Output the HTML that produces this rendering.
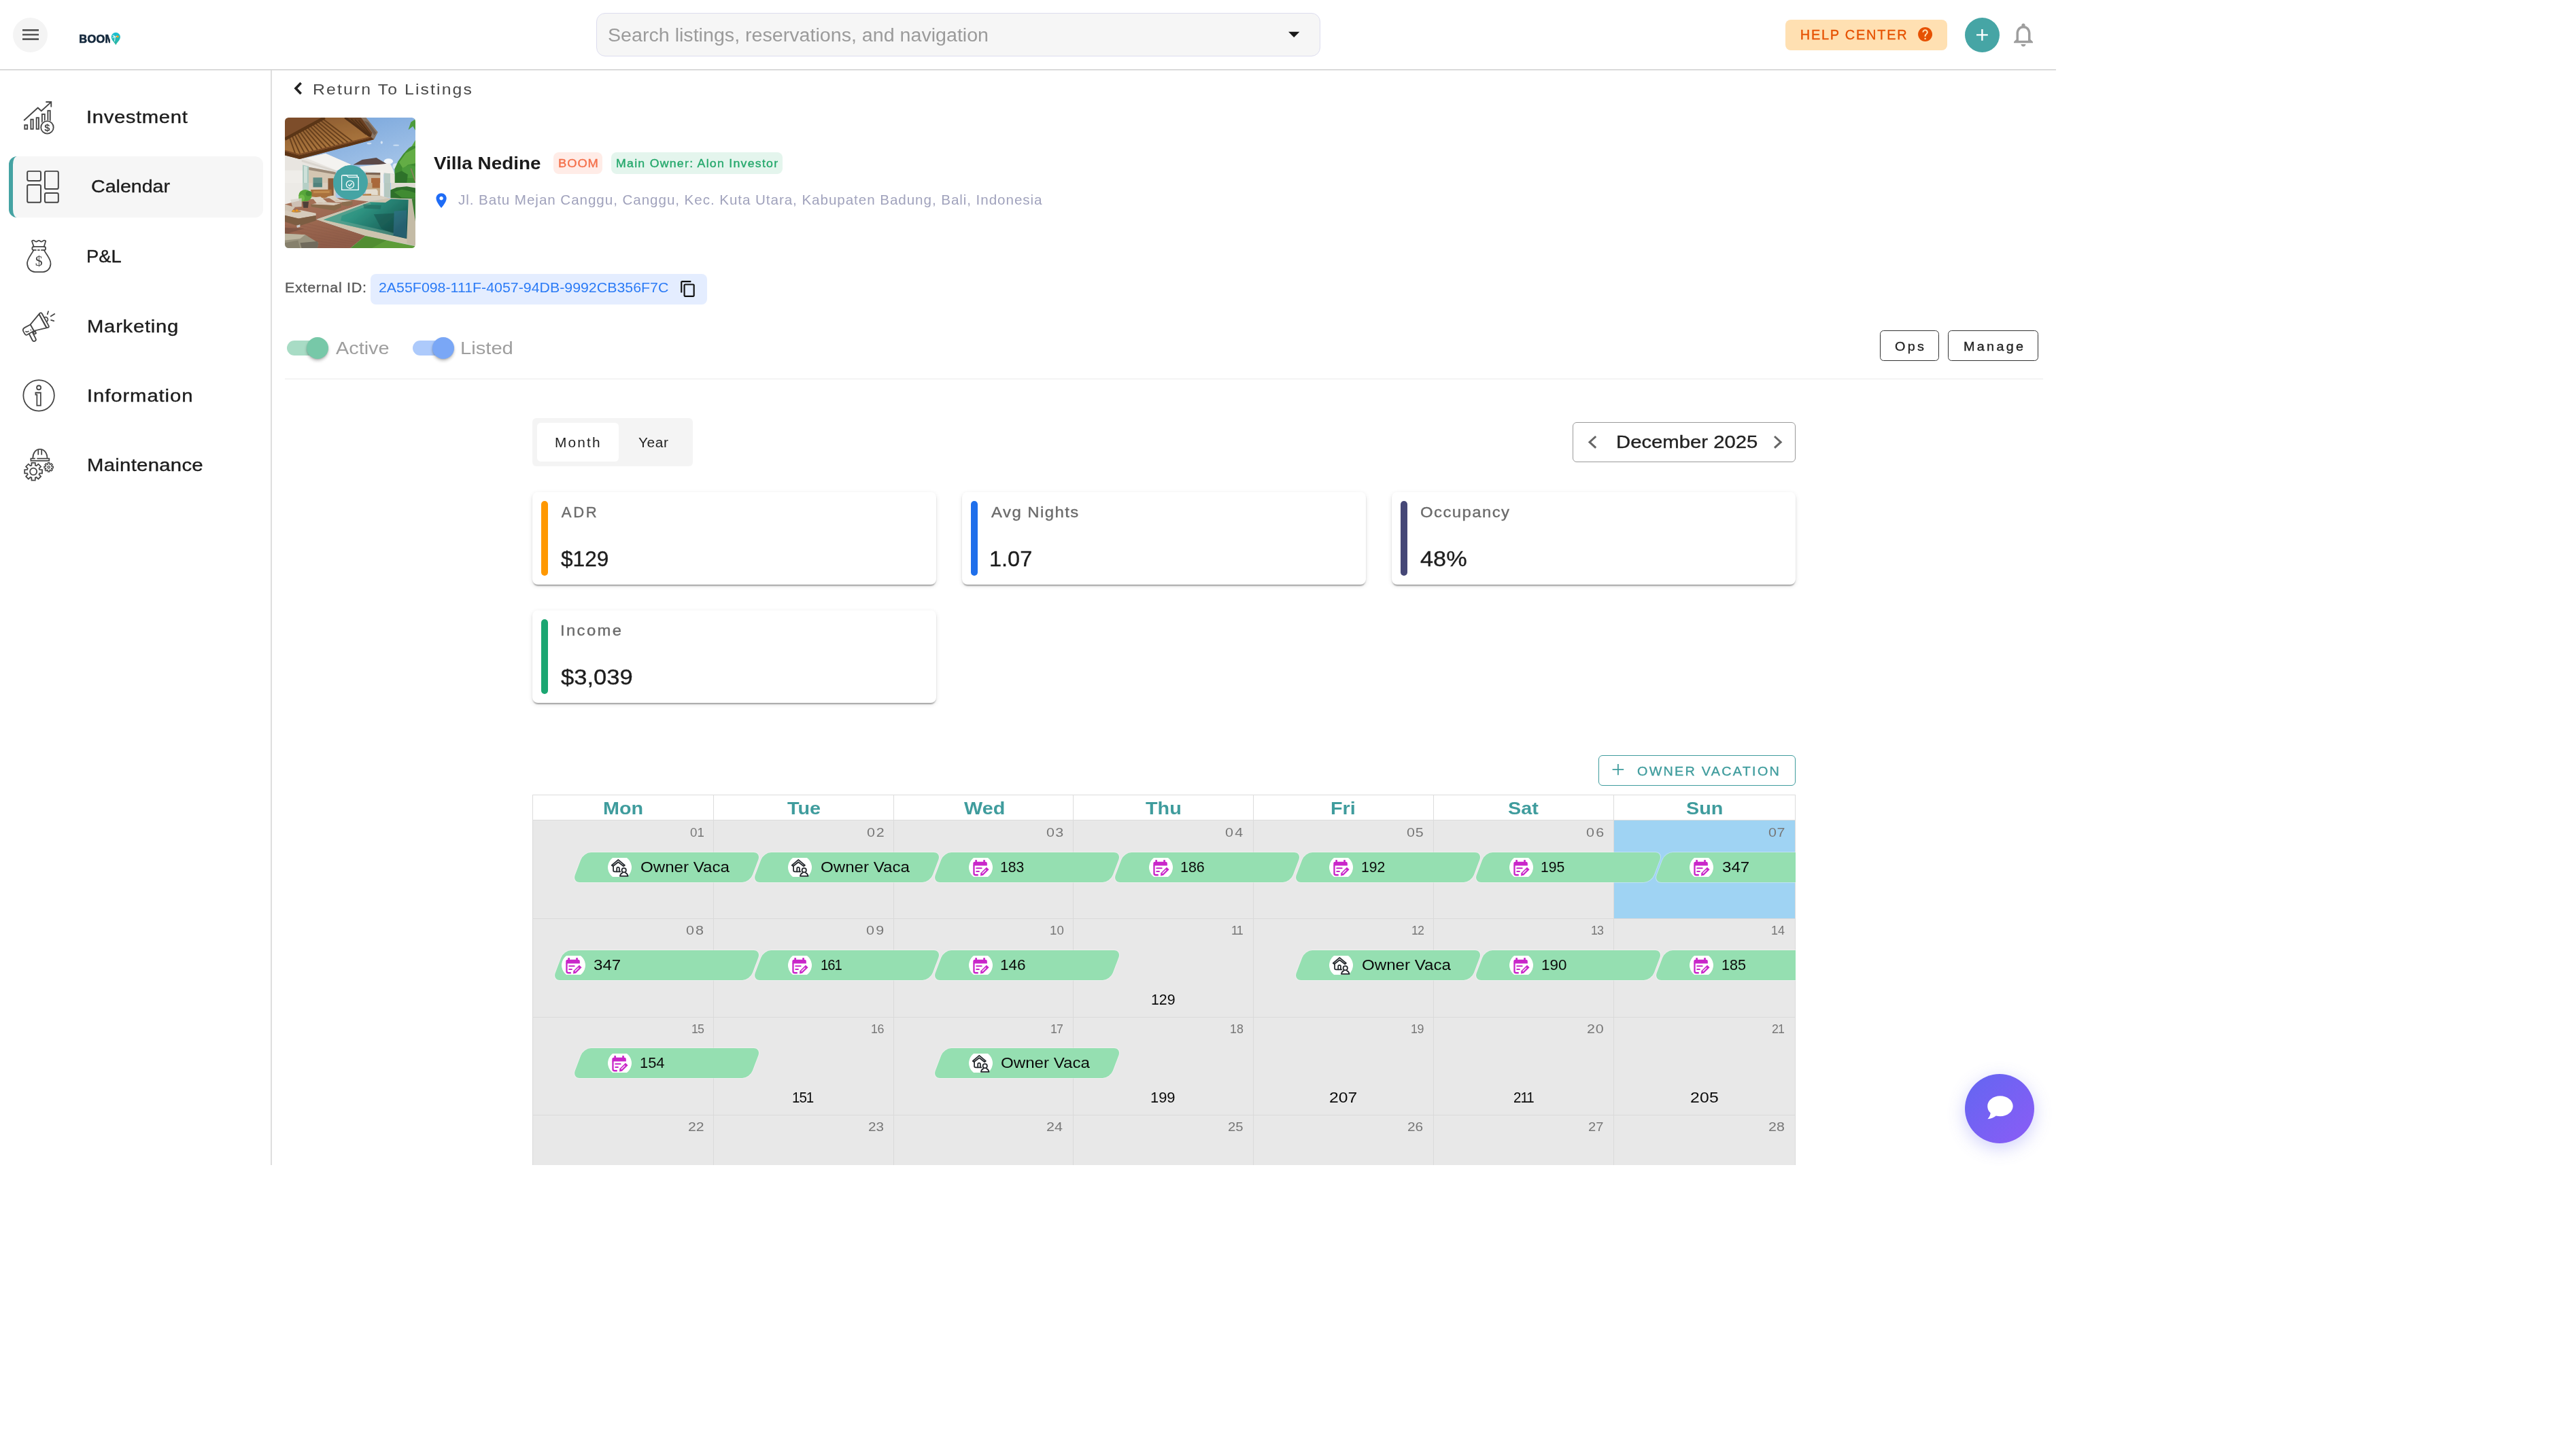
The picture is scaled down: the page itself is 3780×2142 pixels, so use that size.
<!DOCTYPE html>
<html lang="en"><head><meta charset="utf-8"><title>Villa Nedine - Calendar</title>
<style>
html,body{margin:0;padding:0;background:#fff}
body{width:3780px;height:2142px;position:relative;overflow:hidden;font-family:"Liberation Sans",sans-serif}
div{position:absolute;box-sizing:border-box}
#app{left:0;top:0;width:3780px;height:2142px;will-change:transform}
svg{position:absolute;overflow:visible}
.t{position:absolute;white-space:pre;line-height:1;transform-origin:0 50%}
.bar{background:#95dfb1;border-radius:11px;transform:skewX(-20.7deg);height:44.2px;box-shadow:0 0 0 1px rgba(255,255,255,.32)}
.pill{width:35px;height:28px;background:radial-gradient(circle at 50% 50%,#fff 17px,rgba(255,255,255,0) 17.8px)}
.card{background:#fff;border-radius:8px;box-shadow:0 4px 2px -2px rgba(0,0,0,.2),0 2px 2px 0 rgba(0,0,0,.14),0 2px 6px 0 rgba(0,0,0,.12)}
.vbar{width:10px;height:110px;border-radius:5px}

</style></head>
<body>
<div id="app">
<div style="left:0px;top:102px;width:3024px;height:1px;background:#c8c8c8"></div>
<div style="left:0px;top:103px;width:3024px;height:1px;background:#eeeeee"></div>
<div style="left:19px;top:26px;width:51px;height:51px;border-radius:50%;background:#f4f4f4"></div>
<svg style="left:28.5px;top:34.8px" width="32" height="32" viewBox="0 0 24 24" fill="#555"><path d="M3 18h18v-2H3v2zm0-5h18v-2H3v2zm0-7v2h18V6H3z"/></svg>
<span class="t" style="left:116.30px;top:49.40px;font-size:16.42px;color:#14283c;font-weight:700;letter-spacing:0.30px;-webkit-text-stroke:0.7px;">BOOM</span>
<svg style="left:155px;top:40px" width="30" height="32" viewBox="155 40 30 32"><defs><linearGradient id="lg" x1="0" y1="0" x2="0" y2="1"><stop offset="0" stop-color="#19bfd6"/><stop offset="1" stop-color="#2db59c"/></linearGradient></defs><path d="M161.9,44 L180,44 L180,70 L161.9,70 Z" fill="#fff"/><path d="M170.3,66.2 C167.8,61.3 163.7,59.2 163.7,54.3 A6.6 6.6 0 1 1 176.9,54.3 C176.9,59.2 172.8,61.3 170.3,66.2Z" fill="url(#lg)"/><ellipse cx="172.7" cy="53.8" rx="2.1" ry="1.5" fill="#f7a21b"/><path d="M169.2,54.6 L168.6,60.6 M169.2,54.4 L165.8,52.6 M169.2,54.6 L165.6,55.6 M169.2,54.4 L171.4,53.4 M169.2,54.4 L167.2,51.8" stroke="#eafafa" stroke-width="1" fill="none" stroke-linecap="round"/></svg>
<div style="left:877px;top:19px;width:1065px;height:64px;border:1px solid #dcdcee;background:#f6f6f6;border-radius:13px"></div>
<span class="t" style="left:894.29px;top:38.22px;font-size:27.62px;color:#9b9b9b;transform:scaleX(1.0367);">Search listings, reservations, and navigation</span>
<svg style="left:1894px;top:46px" width="18" height="10" viewBox="0 0 18 10" ><path d="M1,0.8 L17.4,0.8 L9.2,9Z" fill="#1a1a1a"/></svg>
<div style="left:2626px;top:29px;width:238px;height:45px;background:#ffe0b2;border-radius:8px"></div>
<span class="t" style="left:2647.80px;top:42.15px;font-size:19.91px;color:#e65100;letter-spacing:1.78px;-webkit-text-stroke:0.35px;">HELP CENTER</span>
<svg style="left:2818.7px;top:37.8px" width="25.2" height="25.2" viewBox="0 0 24 24" fill="#e65100"><path d="M12 2C6.48 2 2 6.48 2 12s4.48 10 10 10 10-4.48 10-10S17.52 2 12 2zm1 17h-2v-2h2v2zm2.07-7.75l-.9.92C13.45 12.9 13 13.5 13 15h-2v-.5c0-1.1.45-2.1 1.17-2.83l1.24-1.26c.37-.36.59-.86.59-1.41 0-1.1-.9-2-2-2s-2 .9-2 2H8c0-2.21 1.79-4 4-4s4 1.79 4 4c0 .88-.36 1.68-.93 2.25z"/></svg>
<div style="left:2890px;top:26px;width:51px;height:51px;border-radius:50%;background:#46a5a5"></div>
<svg style="left:2901px;top:37.1px" width="28.8" height="28.8" viewBox="0 0 24 24" fill="#fff"><path d="M19 13h-6v6h-2v-6H5v-2h6V5h2v6h6v2z"/></svg>
<svg style="left:2954.8px;top:30.3px" width="42" height="42" viewBox="0 0 24 24" fill="#9e9e9e"><path d="M12 22c1.1 0 2-.9 2-2h-4c0 1.1.9 2 2 2zm6-6v-5c0-3.07-1.63-5.64-4.5-6.32V4c0-.83-.67-1.5-1.5-1.5s-1.5.67-1.5 1.5v.68C7.64 5.36 6 7.92 6 11v5l-2 2v1h16v-1l-2-2zm-2 1H8v-6c0-2.48 1.51-4.5 4-4.5s4 2.02 4 4.5v6z"/></svg>
<div style="left:398px;top:103px;width:2px;height:1611px;background:#dedede"></div>
<div style="left:13px;top:230px;width:374px;height:90px;background:#f6f6f6;border-left:6px solid #45a3a3;border-radius:12px"></div>
<svg style="left:20px;top:130px" width="100" height="80" viewBox="0 0 1820 1456" fill="none" stroke="#454545" stroke-width="34" stroke-linejoin="round" stroke-linecap="round"><polyline points="275,860 650,518 742,605 1005,366" stroke-linecap="butt"/><polyline points="862,364 1006,364 1006,500" stroke-linecap="butt" stroke-linejoin="miter"/><rect x="297" y="982" width="71" height="106" stroke-linejoin="miter"/><rect x="462" y="832" width="61" height="256" stroke-linejoin="miter"/><rect x="612" y="787" width="61" height="301" stroke-linejoin="miter"/><rect x="762" y="692" width="71" height="396" stroke-linejoin="miter"/><rect x="917" y="597" width="61" height="491" stroke-linejoin="miter"/><circle cx="900" cy="1045" r="196" fill="#fff" stroke="none"/><circle cx="900" cy="1045" r="168" fill="#fff"/><text x="900" y="1140" text-anchor="middle" font-family="Liberation Sans, sans-serif" font-weight="700" font-size="270" fill="#454545" stroke="none">$</text></svg>
<svg style="left:20px;top:235px" width="100" height="80" viewBox="0 0 1820 1456" fill="none" stroke="#454545" stroke-width="36" stroke-linejoin="round" stroke-linecap="round"><rect x="367" y="307" width="361" height="256" rx="38"/><rect x="367" y="672" width="361" height="471" rx="38"/><rect x="837" y="307" width="361" height="476" rx="38"/><rect x="837" y="892" width="361" height="251" rx="38"/></svg>
<svg style="left:20px;top:340px" width="100" height="80" viewBox="0 0 1820 1456" fill="none" stroke="#454545" stroke-width="32" stroke-linejoin="round" stroke-linecap="round"><path d="M490,268 Q525,232 562,262 Q600,300 640,268 Q675,238 710,268 Q748,300 786,262 Q822,232 860,268 L815,416 L540,416 Z"/><path d="M540,418 C482,418 482,508 540,508 L600,508 M815,418 C873,418 873,508 815,508 L745,508 M652,508 L690,508"/><path d="M535,512 C470,640 352,745 365,880 C378,1010 470,1095 570,1095 L790,1095 C890,1095 982,1010 992,880 C1002,745 880,640 818,512"/><text x="677" y="935" text-anchor="middle" font-family="Liberation Serif, serif" font-size="400" fill="#454545" stroke="none">$</text></svg>
<svg style="left:20px;top:445px" width="100" height="80" viewBox="0 0 1820 1456" fill="none" stroke="#454545" stroke-width="32" stroke-linejoin="round" stroke-linecap="round"><line x1="465" y1="828" x2="547" y2="988" stroke-width="132"/><line x1="465" y1="828" x2="547" y2="988" stroke="#fff" stroke-width="66"/><path d="M520,800 L582,776 L602,826 L545,852 Z" fill="#fff"/><path d="M450,590 L300,671 Q228,712 262,775 L300,843 Q338,905 408,836 L545,760 Z" fill="#fff"/><path d="M450,590 L680,312 L880,680 L545,760 Z" fill="#fff"/><path d="M822,400 A64 64 0 0 1 884,512" /><line x1="726" y1="314" x2="906" y2="638" stroke-width="106"/><line x1="726" y1="314" x2="906" y2="638" stroke="#fff" stroke-width="40"/><path d="M930,238 L906,314 M1098,307 L996,370 M1002,471 L1078,495"/><path d="M326,775 Q360,802 400,772 M460,733 L464,741" stroke-width="28"/></svg>
<svg style="left:20px;top:545px" width="100" height="80" viewBox="0 0 1820 1456" fill="none" stroke="#454545" stroke-width="32" stroke-linejoin="round" stroke-linecap="round"><circle cx="675" cy="670" r="414"/><circle cx="675" cy="460" r="55"/><path d="M590,596 L725,596 L725,940 L625,940 L625,650 L590,650 Z" stroke-linejoin="miter"/></svg>
<svg style="left:20px;top:650px" width="100" height="80" viewBox="0 0 1820 1456" fill="none" stroke="#454545" stroke-width="32" stroke-linejoin="round" stroke-linecap="round"><path d="M515,440 C515,300 590,197 705,197 C820,197 900,300 900,440"/><path d="M660,214 L660,352 M750,214 L750,352" stroke-linecap="butt"/><path d="M580,447 L462,447 L462,506 L952,506 L952,447 L625,447" stroke-linejoin="miter" stroke-linecap="butt"/><path d="M480,631 L482,560 L578,560 L580,631 L611,643 L662,595 L730,663 L682,714 L694,745 L765,747 L765,843 L694,845 L682,876 L730,927 L662,995 L611,947 L580,959 L578,1030 L482,1030 L480,959 L449,947 L398,995 L330,927 L378,876 L366,845 L295,843 L295,747 L366,745 L378,714 L330,663 L398,595 L449,643 Z" stroke-linejoin="miter"/><circle cx="530" cy="795" r="92"/><path d="M915,600 L919,560 L961,560 L965,600 L979,606 L1010,580 L1040,610 L1014,641 L1020,655 L1060,659 L1060,701 L1020,705 L1014,719 L1040,750 L1010,780 L979,754 L965,760 L961,800 L919,800 L915,760 L901,754 L870,780 L840,750 L866,719 L860,705 L820,701 L820,659 L860,655 L866,641 L840,610 L870,580 L901,606 Z" stroke-width="26" stroke-linejoin="miter"/><circle cx="940" cy="680" r="30" stroke-width="24"/></svg>
<span class="t" style="left:127.00px;top:158.86px;font-size:26.16px;color:#1c1c1c;letter-spacing:0.55px;transform:scaleX(1.1200);-webkit-text-stroke:0.35px;">Investment</span>
<span class="t" style="left:134.09px;top:261.26px;font-size:26.16px;color:#1c1c1c;transform:scaleX(1.0928);-webkit-text-stroke:0.35px;">Calendar</span>
<span class="t" style="left:127.34px;top:363.86px;font-size:26.16px;color:#1c1c1c;transform:scaleX(1.0448);-webkit-text-stroke:0.35px;">P&amp;L</span>
<span class="t" style="left:127.50px;top:466.56px;font-size:26.16px;color:#1c1c1c;letter-spacing:0.64px;transform:scaleX(1.1200);-webkit-text-stroke:0.35px;">Marketing</span>
<span class="t" style="left:127.50px;top:569.46px;font-size:26.16px;color:#1c1c1c;letter-spacing:0.80px;transform:scaleX(1.1200);-webkit-text-stroke:0.35px;">Information</span>
<span class="t" style="left:127.50px;top:670.56px;font-size:26.16px;color:#1c1c1c;letter-spacing:0.26px;transform:scaleX(1.1200);-webkit-text-stroke:0.35px;">Maintenance</span>
<svg style="left:431px;top:118.3px" width="15.7" height="24" viewBox="0 0 15.7 24" ><polyline points="11.7,4 4,12 11.7,20" fill="none" stroke="#222" stroke-width="3.6" stroke-linejoin="miter"/></svg>
<span class="t" style="left:459.50px;top:120.46px;font-size:22.97px;color:#4a4a4a;letter-spacing:1.95px;transform:scaleX(1.0800);">Return To Listings</span>
<svg style="left:419px;top:173px" width="192" height="192" viewBox="0 0 192 192"><defs><linearGradient id="sky" x1="0" y1="0" x2="0.3" y2="1"><stop offset="0" stop-color="#6f9fd9"/><stop offset="0.5" stop-color="#9dbfe6"/><stop offset="1" stop-color="#c9dcf0"/></linearGradient><linearGradient id="pool" x1="0" y1="0" x2="1" y2="0.6"><stop offset="0" stop-color="#4aa892"/><stop offset="0.45" stop-color="#2f9482"/><stop offset="0.8" stop-color="#1f6f64"/><stop offset="1" stop-color="#17524c"/></linearGradient><linearGradient id="roof" x1="0" y1="0" x2="0.4" y2="1"><stop offset="0" stop-color="#8a5a30"/><stop offset="1" stop-color="#b27c40"/></linearGradient><linearGradient id="deck" x1="0" y1="0" x2="0.3" y2="1"><stop offset="0" stop-color="#a8745a"/><stop offset="1" stop-color="#8f5c48"/></linearGradient><clipPath id="vclip"><rect x="0" y="0" width="192" height="192" rx="5.5"/></clipPath><filter id="vb" x="-5%" y="-5%" width="110%" height="110%"><feGaussianBlur stdDeviation="0.35"/></filter></defs><g clip-path="url(#vclip)"><g filter="url(#vb)"><rect x="-2" y="-2" width="196" height="196" fill="url(#sky)"/><ellipse cx="124.0" cy="38.1" rx="3.4" ry="1.3" fill="#dce9f6" opacity=".8"/><ellipse cx="142.3" cy="36.6" rx="1.6" ry="2.2" fill="#e4eef8" opacity=".8"/><ellipse cx="163.6" cy="40.7" rx="4.5" ry="1.2" fill="#d9e7f5" opacity=".7"/><ellipse cx="152.4" cy="64.3" rx="6.7" ry="4.1" fill="#f3f7fb" /><ellipse cx="162.9" cy="71.7" rx="4.5" ry="4.5" fill="#e9f0f8" opacity=".8"/><polygon points="156.1,91.5 192.0,91.5 192.0,105.0 156.1,106.5" fill="#dedbd2" /><polygon points="161.4,96.0 161.4,75.5 166.6,64.3 174.1,53.8 182.3,44.8 192.0,38.8 192.0,96.0" fill="#3f8c30" /><polygon points="168.1,65.7 177.8,52.3 192.0,44.8 192.0,67.2 180.8,69.5 174.1,75.5" fill="#63ad45" /><polygon points="171.8,74.7 183.0,69.5 192.0,71.7 192.0,89.7 175.6,88.2" fill="#4c9a3a" /><polygon points="162.1,82.2 171.8,78.4 180.8,83.7 179.3,96.0 162.1,96.0" fill="#2f7229" /><polyline points="185.3,74.7 192.0,94.1" fill="none" stroke="#8d8060" stroke-width="1.64" /><polygon points="181.5,17.9 185.3,6.7 192.0,2.2 192.0,18.7 188.3,12.7" fill="#4e9b3a" /><polygon points="186.8,41.8 192.0,32.9 192.0,41.8" fill="#5aa840" /><polygon points="155.4,106.5 164.4,102.7 179.3,101.2 192.0,103.5 192.0,120.7 185.3,119.5 155.4,118.4" fill="#2f6f2a" /><polygon points="160.6,109.4 171.8,105.7 183.0,108.0 192.0,110.9 192.0,118.4 171.8,117.7" fill="#418b33" /><polygon points="100.1,69.6 113.6,62.0 134.5,59.0 148.7,67.6 150.2,69.1" fill="#5b4a47" /><polygon points="109.8,71.9 154.7,67.2 159.5,77.0 161.4,82.9 115.1,79.3" fill="#f1efea" /><polygon points="115.1,79.3 161.4,82.9 161.4,84.4 115.1,81.1" fill="#d9d5cd" /><polygon points="118.8,81.1 140.5,81.1 140.5,96.0 118.8,96.0" fill="#c9b59c" /><polygon points="118.8,81.1 140.5,81.1 140.5,84.4 118.8,83.7" fill="#7d6552" /><polygon points="127.0,88.9 140.1,88.9 140.1,96.0 127.0,96.0" fill="#a9683a" /><polygon points="118.8,96.0 140.5,96.0 140.5,115.4 118.8,114.7" fill="#c2a784" /><polygon points="128.5,96.0 139.7,96.0 139.7,103.5 128.5,103.5" fill="#a8683a" /><polygon points="118.8,105.7 134.5,105.3 136.7,108.0 136.7,113.9 118.8,113.6" fill="#e3dccf" /><polygon points="114.3,112.4 127.0,112.1 127.0,115.4 114.3,115.6" fill="#b9814a" /><polygon points="140.5,78.4 145.3,78.4 145.3,96.0 140.5,96.0" fill="#f3f1ec" /><polygon points="140.1,96.0 145.7,96.0 145.7,119.9 140.1,119.5" fill="#f1efea" /><polygon points="146.1,81.4 155.0,82.2 155.0,96.0 146.1,96.0" fill="#b8cbc3" /><polygon points="146.1,96.0 155.0,96.0 155.0,117.3 146.1,118.0" fill="#b5c8c0" /><polygon points="155.0,82.2 161.4,84.0 161.4,96.0 155.0,96.0" fill="#e6e3dc" /><polygon points="99.4,114.7 140.5,114.7 153.2,118.4 123.3,123.6 99.4,121.4" fill="#d8d0c2" /><polygon points="0.0,55.3 21.7,60.9 59.8,52.7 97.1,69.1 75.5,78.4 75.5,96.0 0.0,96.0" fill="#e8e5e0" /><polygon points="32.1,59.8 59.8,52.7 97.1,69.1 76.2,77.7" fill="#f4f3f0" /><polygon points="24.7,61.6 75.5,78.1 75.5,80.3 24.7,65.0" fill="#dad6cf" /><polygon points="35.1,72.8 74.7,80.3 74.7,96.0 35.1,96.0" fill="#d4c6b2" /><polygon points="35.1,72.8 74.7,80.3 74.7,83.7 35.1,77.0" fill="#9b8a78" /><polygon points="26.1,69.5 35.1,71.7 35.1,96.0 26.1,96.0" fill="#a9c8bf" /><polygon points="28.0,71.0 32.9,72.1 32.9,96.0 28.0,96.0" fill="#cfe1da" /><polygon points="0.0,77.7 26.1,77.7 26.1,96.0 0.0,96.0" fill="#efede9" /><polygon points="41.5,88.2 54.9,88.2 54.9,96.0 41.5,96.0" fill="#5f8f88" /><polygon points="63.5,89.3 71.7,89.3 71.7,96.0 63.5,96.0" fill="#8a5a38" /><polygon points="0.0,96.0 26.9,96.0 26.9,127.4 0.0,137.8" fill="#eceae6" /><polygon points="26.1,96.0 35.1,96.0 35.1,120.7 26.1,122.9" fill="#b5cfc6" /><polygon points="35.1,96.0 74.7,96.0 74.7,117.7 35.1,120.7" fill="#d9cdbd" /><polygon points="41.5,96.0 54.9,96.0 54.9,102.4 41.5,102.4" fill="#4f827c" /><polygon points="63.5,96.0 71.7,96.0 71.7,114.7 63.5,115.4" fill="#8a5a38" /><polygon points="38.1,106.1 68.7,105.7 69.1,114.7 58.3,118.4 38.8,116.2" fill="#a9713d" /><polygon points="41.8,108.0 65.7,107.6 65.7,110.9 41.8,111.3" fill="#c08a4e" /><polygon points="0.0,0.0 112.1,0.0 136.0,21.7 130.7,32.1 21.7,60.9 0.0,55.3" fill="url(#roof)" /><polygon points="0.0,0.0 58.3,0.0 0.0,32.1" fill="#7d4e2b" /><polygon points="88.2,0.0 112.1,0.0 136.0,21.7 130.7,32.1 127.0,29.3" fill="#6b4122" /><polyline points="55.3,1.5 99.4,35.1" fill="none" stroke="#5e3819" stroke-width="1.94" opacity=".85"/><polyline points="51.6,3.6 92.9,36.6" fill="none" stroke="#5e3819" stroke-width="1.94" opacity=".85"/><polyline points="47.8,5.7 86.5,38.1" fill="none" stroke="#5e3819" stroke-width="1.94" opacity=".85"/><polyline points="44.1,7.8 80.1,39.6" fill="none" stroke="#5e3819" stroke-width="1.94" opacity=".85"/><polyline points="40.3,9.9 73.7,41.1" fill="none" stroke="#5e3819" stroke-width="1.94" opacity=".85"/><polyline points="36.6,12.0 67.2,42.6" fill="none" stroke="#5e3819" stroke-width="1.94" opacity=".85"/><polyline points="32.9,14.0 60.8,44.1" fill="none" stroke="#5e3819" stroke-width="1.94" opacity=".85"/><polyline points="29.1,16.1 54.4,45.6" fill="none" stroke="#5e3819" stroke-width="1.94" opacity=".85"/><polyline points="25.4,18.2 48.0,47.1" fill="none" stroke="#5e3819" stroke-width="1.94" opacity=".85"/><polyline points="21.7,20.3 41.5,48.6" fill="none" stroke="#5e3819" stroke-width="1.94" opacity=".85"/><polyline points="17.9,22.4 35.1,50.1" fill="none" stroke="#5e3819" stroke-width="1.94" opacity=".85"/><polyline points="14.2,24.5 28.7,51.6" fill="none" stroke="#5e3819" stroke-width="1.94" opacity=".85"/><polyline points="10.5,26.6 22.3,53.0" fill="none" stroke="#5e3819" stroke-width="1.94" opacity=".85"/><polyline points="6.7,28.7 15.8,54.5" fill="none" stroke="#5e3819" stroke-width="1.94" opacity=".85"/><polyline points="91.9,1.5 119.5,24.7" fill="none" stroke="#4a2c14" stroke-width="1.79" opacity=".8"/><polyline points="97.5,2.2 122.9,26.3" fill="none" stroke="#4a2c14" stroke-width="1.79" opacity=".8"/><polyline points="103.1,3.0 126.3,27.9" fill="none" stroke="#4a2c14" stroke-width="1.79" opacity=".8"/><polyline points="108.7,3.7 129.6,29.6" fill="none" stroke="#4a2c14" stroke-width="1.79" opacity=".8"/><polyline points="0.0,31.8 58.6,0.0" fill="none" stroke="#5a3418" stroke-width="4.63" /><polyline points="88.2,0.0 128.9,30.3" fill="none" stroke="#4f2e15" stroke-width="2.99" /><polygon points="112.1,0.0 119.5,0.0 136.7,21.3 131.1,32.1 126.3,28.8 128.5,22.4" fill="#8a7563" /><polygon points="116.5,4.5 122.5,6.7 134.5,22.4 131.5,26.1" fill="#6d5a4b" /><polygon points="127.0,29.3 130.9,32.3 21.7,61.1 0.0,55.4 0.0,49.5 20.9,55.4" fill="#5b3419" /><polygon points="127.0,29.3 20.9,55.4 0.0,49.5 0.0,47.8 20.9,53.4 126.3,27.8" fill="#7a4a26" /><polygon points="0.0,127.4 26.9,120.7 74.7,117.7 99.4,120.7 123.3,123.6 46.3,149.8 118.8,173.7 96.4,192.0 0.0,192.0" fill="url(#deck)" /><polyline points="0.0,148.3 112.1,175.2" fill="none" stroke="#7e4f3e" stroke-width="0.60" opacity=".35"/><polyline points="0.0,153.5 110.6,178.2" fill="none" stroke="#7e4f3e" stroke-width="0.60" opacity=".35"/><polyline points="0.0,158.8 109.1,181.2" fill="none" stroke="#7e4f3e" stroke-width="0.60" opacity=".35"/><polyline points="0.0,164.0 107.6,184.2" fill="none" stroke="#7e4f3e" stroke-width="0.60" opacity=".35"/><polyline points="0.0,169.2 106.1,187.1" fill="none" stroke="#7e4f3e" stroke-width="0.60" opacity=".35"/><polyline points="0.0,174.4 104.6,190.1" fill="none" stroke="#7e4f3e" stroke-width="0.60" opacity=".35"/><polyline points="0.0,179.7 103.1,193.1" fill="none" stroke="#7e4f3e" stroke-width="0.60" opacity=".35"/><polyline points="0.0,184.9 101.6,196.1" fill="none" stroke="#7e4f3e" stroke-width="0.60" opacity=".35"/><polyline points="0.0,190.1 100.1,199.1" fill="none" stroke="#7e4f3e" stroke-width="0.60" opacity=".35"/><polygon points="0.0,161.7 28.4,163.2 0.0,171.5" fill="#6e4a3c" opacity=".55"/><polygon points="46.3,149.8 123.3,123.6 153.2,118.4 192.0,119.8 192.0,189.0 118.8,174.1" fill="#cdc4af" /><polygon points="182.3,120.7 186.8,119.8 192.0,152.8 192.0,189.0 179.3,184.9" fill="#c4bba6" /><polygon points="186.8,119.8 192.0,119.8 192.0,152.8" fill="#3a7d30" /><polygon points="56.8,150.2 125.5,124.2 147.9,125.0 156.1,119.8 181.7,120.8 179.3,178.3" fill="url(#pool)" /><polygon points="56.8,150.2 125.5,124.2 127.0,127.8 83.7,144.6 82.2,151.4 160.6,169.6 159.1,174.1" fill="#6aa593" opacity=".55"/><polygon points="115.1,127.4 141.9,128.9 140.5,134.8 116.5,133.4" fill="#1f6257" opacity=".5"/><polygon points="160.6,137.8 179.3,136.3 178.9,177.8 159.1,173.0" fill="#3c6f9a" opacity=".45"/><polygon points="130.7,142.3 160.6,140.8 159.9,170.7 141.9,163.2" fill="#154a44" opacity=".45"/><polygon points="118.4,174.1 192.0,189.2 192.0,192.4 96.0,192.4" fill="#5d9c38" /><polygon points="118.4,174.1 149.4,180.4 127.0,192.4 96.0,192.4" fill="#4a8430" opacity=".6"/><ellipse cx="29.9" cy="114.7" rx="9.7" ry="8.6" fill="#58a63b" /><ellipse cx="24.7" cy="118.4" rx="4.5" ry="5.2" fill="#6fba4a" /><ellipse cx="35.1" cy="111.7" rx="4.5" ry="3.7" fill="#438c30" /><polygon points="26.1,123.8 35.1,123.8 34.0,132.8 27.3,132.8" fill="#4d3f39" /><polygon points="8.2,120.7 24.7,118.4 24.7,131.1 11.2,131.9" fill="#d8d4cc" opacity=".8"/><polygon points="62.0,116.3 71.0,114.7 81.1,120.8 71.7,122.3" fill="#d9d0c1" /><polygon points="71.7,122.3 81.1,120.8 99.4,122.3 91.5,124.7 74.7,124.4" fill="#d3c8b8" /><polygon points="83.7,124.5 99.4,122.3 99.4,128.1 91.9,130.5 83.7,129.0" fill="#8b6d4f" /><polygon points="40.3,117.8 52.3,116.2 62.4,124.5 46.7,126.0" fill="#dbd2c3" /><polygon points="38.8,127.4 46.7,126.0 62.4,124.5 82.9,126.0 72.1,129.0" fill="#d6cbbb" /><polygon points="38.1,127.5 72.1,129.2 82.9,126.2 82.9,132.0 72.5,136.7 38.8,131.3" fill="#886a4c" /><polygon points="0.0,127.4 14.9,131.9 9.7,138.0 0.0,136.7" fill="#cfc3b3" /><polygon points="0.0,136.3 9.7,137.8 23.9,136.3 45.7,140.8 45.7,144.0 20.2,148.4 0.0,144.0" fill="#d6cbbc" /><polygon points="0.0,143.8 20.2,148.4 45.7,144.0 45.7,151.4 20.2,159.7 0.0,152.9" fill="#7b5d43" /><polygon points="17.2,158.8 22.4,157.3 22.4,161.0 17.9,162.1" fill="#c9c9c9" /><ellipse cx="16.8" cy="138.2" rx="7.1" ry="1.6" fill="#b98a4e" /><ellipse cx="12.7" cy="137.2" rx="1.8" ry="1.3" fill="#f2a01e" /><ellipse cx="17.6" cy="136.5" rx="1.8" ry="1.5" fill="#f0961a" /><polygon points="0.0,170.7 29.9,172.2 49.3,184.2 47.8,192.4 0.0,192.4" fill="#9a947f" /><polygon points="0.0,170.7 29.9,172.2 22.4,178.2 0.0,180.4" fill="#bdb7a1" /><polygon points="22.4,184.2 47.8,181.9 49.3,185.7 47.8,192.4 24.7,192.4" fill="#6f6b5b" /><polygon points="0.0,184.2 19.4,180.4 22.4,192.4 0.0,192.4" fill="#86806c" /></g></g></svg>
<div style="left:490px;top:243px;width:51px;height:51px;border-radius:50%;background:#45a4a4"></div>
<svg style="left:498px;top:252px" width="36" height="34" viewBox="498 252 36 34" fill="none" stroke="#fff" stroke-width="1.3"><path d="M502.6,279.4 L502.6,259 Q502.6,257.9 503.7,257.9 L509.6,257.9 L512.2,260.6 L527.2,260.6 L527.2,279.4 Z"/><path d="M504.5,257.9 L525.3,257.9 L525.3,260.6"/><circle cx="514.9" cy="271.4" r="5.6"/><path d="M512.2,271.5 L514.2,273.5 L517.8,269.4"/></svg>
<span class="t" style="left:637.70px;top:226.87px;font-size:26.02px;color:#1b1b1b;font-weight:700;transform:scaleX(1.0715);">Villa Nedine</span>
<div style="left:814px;top:224px;width:72px;height:32px;background:#ffece7;border-radius:8px"></div>
<span class="t" style="left:821.10px;top:232.20px;font-size:16.42px;color:#f4714c;letter-spacing:0.82px;transform:scaleX(1.1200);-webkit-text-stroke:0.35px;">BOOM</span>
<div style="left:899px;top:224px;width:252px;height:32px;background:#e4f5ed;border-radius:8px"></div>
<span class="t" style="left:905.60px;top:232.20px;font-size:16.42px;color:#25a86c;letter-spacing:1.17px;transform:scaleX(1.0800);-webkit-text-stroke:0.35px;">Main Owner: Alon Investor</span>
<svg style="left:636.1px;top:281.8px" width="26.2" height="26.2" viewBox="0 0 24 24" fill="#1f6cf6"><path d="M12 2C8.13 2 5 5.13 5 9c0 5.25 7 13 7 13s7-7.75 7-13c0-3.87-3.13-7-7-7zm0 9.5c-1.38 0-2.5-1.12-2.5-2.5s1.12-2.5 2.5-2.5 2.5 1.12 2.5 2.5-1.12 2.5-2.5 2.5z"/></svg>
<span class="t" style="left:674.00px;top:284.91px;font-size:19.48px;color:#a0a2bc;letter-spacing:0.87px;transform:scaleX(1.0600);">Jl. Batu Mejan Canggu, Canggu, Kec. Kuta Utara, Kabupaten Badung, Bali, Indonesia</span>
<span class="t" style="left:419.20px;top:412.97px;font-size:20.35px;color:#5a5a5a;letter-spacing:0.62px;transform:scaleX(1.0600);-webkit-text-stroke:0.35px;">External ID:</span>
<div style="left:545px;top:403px;width:495px;height:45px;background:#e4edff;border-radius:8px"></div>
<span class="t" style="left:556.79px;top:412.97px;font-size:20.35px;color:#2b7bf6;transform:scaleX(1.0491);">2A55F098-111F-4057-94DB-9992CB356F7C</span>
<svg style="left:998.7px;top:412.2px" width="26" height="26" viewBox="0 0 24 24" fill="#111"><path d="M16 1H4c-1.1 0-2 .9-2 2v14h2V3h12V1zm3 4H8c-1.1 0-2 .9-2 2v14c0 1.1.9 2 2 2h11c1.1 0 2-.9 2-2V7c0-1.1-.9-2-2-2zm0 16H8V7h11v14z"/></svg>
<div style="left:422px;top:501.3px;width:52px;height:21.4px;background:#a8dcc5;border-radius:11px"></div>
<div style="left:451px;top:496px;width:32px;height:32px;background:#77c8a8;border-radius:50%;box-shadow:0 3px 4px rgba(0,0,0,.22),0 1px 2px rgba(0,0,0,.14)"></div>
<div style="left:607px;top:501.3px;width:52px;height:21.4px;background:#adcafb;border-radius:11px"></div>
<div style="left:636px;top:496px;width:32px;height:32px;background:#7aa7f6;border-radius:50%;box-shadow:0 3px 4px rgba(0,0,0,.22),0 1px 2px rgba(0,0,0,.14)"></div>
<span class="t" style="left:493.79px;top:498.76px;font-size:26.16px;color:#9e9e9e;transform:scaleX(1.1037);">Active</span>
<span class="t" style="left:676.60px;top:498.76px;font-size:26.16px;color:#9e9e9e;transform:scaleX(1.1148);">Listed</span>
<div style="left:419px;top:557px;width:2586px;height:1px;background:#ebebeb"></div>
<div style="left:2765px;top:486px;width:87px;height:45px;border:1px solid #333;border-radius:5.5px"></div>
<span class="t" style="left:2786.90px;top:499.68px;font-size:19.04px;color:#222;letter-spacing:3.17px;transform:scaleX(1.0400);-webkit-text-stroke:0.35px;">Ops</span>
<div style="left:2865px;top:486px;width:133px;height:45px;border:1px solid #333;border-radius:5.5px"></div>
<span class="t" style="left:2887.90px;top:499.68px;font-size:19.04px;color:#222;letter-spacing:3.17px;transform:scaleX(1.0400);-webkit-text-stroke:0.35px;">Manage</span>
<div style="left:783px;top:615px;width:236px;height:71px;background:#f4f4f4;border-radius:6px"></div>
<div style="left:790px;top:622px;width:120px;height:57px;background:#fff;border-radius:5.5px"></div>
<span class="t" style="left:816.40px;top:641.54px;font-size:19.33px;color:#222;letter-spacing:2.01px;transform:scaleX(1.0800);">Month</span>
<span class="t" style="left:939.20px;top:641.54px;font-size:19.33px;color:#222;letter-spacing:0.53px;transform:scaleX(1.0800);">Year</span>
<div style="left:2313px;top:621px;width:328px;height:59px;border:1px solid #9a9a9a;border-radius:6px;background:#fff"></div>
<svg style="left:2334px;top:637.6px" width="17.2" height="24.8" viewBox="0 0 17.2 24.8" ><polyline points="13.2,4 4,12.4 13.2,20.8" fill="none" stroke="#666" stroke-width="3" stroke-linejoin="miter"/></svg>
<svg style="left:2606.2px;top:637.6px" width="17.2" height="24.8" viewBox="0 0 17.2 24.8" ><polyline points="4,4 13.2,12.4 4,20.8" fill="none" stroke="#666" stroke-width="3" stroke-linejoin="miter"/></svg>
<span class="t" style="left:2377.18px;top:636.66px;font-size:26.16px;color:#222;transform:scaleX(1.1190);-webkit-text-stroke:0.35px;">December 2025</span>
<div class="card" style="left:783px;top:724px;width:594.4px;height:136px"></div>
<div class="vbar" style="left:796px;top:737px;background:#ff9800"></div>
<span class="t" style="left:825.80px;top:742.60px;font-size:22.09px;color:#6a6a6a;letter-spacing:2.69px;-webkit-text-stroke:0.35px;">ADR</span>
<span class="t" style="left:825.40px;top:805.63px;font-size:31.98px;color:#1d1d1d;transform:scaleX(0.9887);-webkit-text-stroke:0.35px;">$129</span>
<div class="card" style="left:1415px;top:724px;width:594.4px;height:136px"></div>
<div class="vbar" style="left:1428px;top:737px;background:#1f6feb"></div>
<span class="t" style="left:1457.80px;top:742.60px;font-size:22.09px;color:#6a6a6a;letter-spacing:1.38px;transform:scaleX(1.0800);-webkit-text-stroke:0.35px;">Avg Nights</span>
<span class="t" style="left:1455.27px;top:805.63px;font-size:31.98px;color:#1d1d1d;transform:scaleX(1.0166);-webkit-text-stroke:0.35px;">1.07</span>
<div class="card" style="left:2047px;top:724px;width:594.4px;height:136px"></div>
<div class="vbar" style="left:2060px;top:737px;background:#454777"></div>
<span class="t" style="left:2088.80px;top:742.60px;font-size:22.09px;color:#6a6a6a;letter-spacing:1.36px;transform:scaleX(1.0800);-webkit-text-stroke:0.35px;">Occupancy</span>
<span class="t" style="left:2089.40px;top:805.63px;font-size:31.98px;color:#1d1d1d;transform:scaleX(1.0725);-webkit-text-stroke:0.35px;">48%</span>
<div class="card" style="left:783px;top:898px;width:594.4px;height:136px"></div>
<div class="vbar" style="left:796px;top:911px;background:#1ba672"></div>
<span class="t" style="left:823.80px;top:916.60px;font-size:22.09px;color:#6a6a6a;letter-spacing:2.19px;transform:scaleX(1.0800);-webkit-text-stroke:0.35px;">Income</span>
<span class="t" style="left:825.40px;top:979.63px;font-size:31.98px;color:#1d1d1d;transform:scaleX(1.0822);-webkit-text-stroke:0.35px;">$3,039</span>
<div style="left:2351px;top:1111px;width:290px;height:45px;border:1px solid #3f9c9d;border-radius:6px"></div>
<svg style="left:2370px;top:1123px" width="20" height="20" viewBox="2370 1123 20 20"><path d="M2371.6,1132.1 L2388.2,1132.1 M2379.9,1123.9 L2379.9,1140.3" stroke="#3f9c9d" stroke-width="1.8" fill="none"/></svg>
<span class="t" style="left:2408.40px;top:1125.36px;font-size:19.19px;color:#3f9c9d;letter-spacing:2.20px;transform:scaleX(1.0300);-webkit-text-stroke:0.35px;">OWNER VACATION</span>
<div style="left:783px;top:1169px;width:1858px;height:38px;background:#fff;border:1px solid #dcdcdc"></div>
<div style="left:1049px;top:1170px;width:1px;height:37px;background:#dcdcdc"></div>
<div style="left:1314px;top:1170px;width:1px;height:37px;background:#dcdcdc"></div>
<div style="left:1578px;top:1170px;width:1px;height:37px;background:#dcdcdc"></div>
<div style="left:1843px;top:1170px;width:1px;height:37px;background:#dcdcdc"></div>
<div style="left:2108px;top:1170px;width:1px;height:37px;background:#dcdcdc"></div>
<div style="left:2373px;top:1170px;width:1px;height:37px;background:#dcdcdc"></div>
<span class="t" style="left:886.78px;top:1175.86px;font-size:26.16px;color:#3f9c9d;font-weight:700;transform:scaleX(1.1000);">Mon</span>
<span class="t" style="left:1158.04px;top:1175.86px;font-size:26.16px;color:#3f9c9d;font-weight:700;transform:scaleX(1.1000);">Tue</span>
<span class="t" style="left:1417.99px;top:1175.86px;font-size:26.16px;color:#3f9c9d;font-weight:700;transform:scaleX(1.1000);">Wed</span>
<span class="t" style="left:1685.23px;top:1175.86px;font-size:26.16px;color:#3f9c9d;font-weight:700;transform:scaleX(1.1000);">Thu</span>
<span class="t" style="left:1957.11px;top:1175.86px;font-size:26.16px;color:#3f9c9d;font-weight:700;transform:scaleX(1.1000);">Fri</span>
<span class="t" style="left:2218.06px;top:1175.86px;font-size:26.16px;color:#3f9c9d;font-weight:700;transform:scaleX(1.1000);">Sat</span>
<span class="t" style="left:2479.76px;top:1175.86px;font-size:26.16px;color:#3f9c9d;font-weight:700;transform:scaleX(1.1000);">Sun</span>
<div style="left:783px;top:1207px;width:1858px;height:507px;background:#e8e8e8;overflow:hidden">
<div style="left:1591px;top:0px;width:266px;height:144px;background:#9fd3f3"></div>
<div style="left:0px;top:144px;width:1858px;height:1px;background:#dadada"></div>
<div style="left:0px;top:289px;width:1858px;height:1px;background:#dadada"></div>
<div style="left:0px;top:433px;width:1858px;height:1px;background:#dadada"></div>
<div style="left:266px;top:0px;width:1px;height:507px;background:#dadada"></div>
<div style="left:531px;top:0px;width:1px;height:507px;background:#dadada"></div>
<div style="left:795px;top:0px;width:1px;height:507px;background:#dadada"></div>
<div style="left:1060px;top:0px;width:1px;height:507px;background:#dadada"></div>
<div style="left:1325px;top:0px;width:1px;height:507px;background:#dadada"></div>
<div style="left:1590px;top:0px;width:1px;height:507px;background:#dadada"></div>
<div style="left:0px;top:0px;width:1px;height:507px;background:#dadada"></div>
<div style="left:1857px;top:0px;width:1px;height:507px;background:#dadada"></div>
<span class="t" style="left:231.64px;top:7.76px;font-size:19.19px;color:#777;transform:scaleX(0.9732);">01</span>
<span class="t" style="left:491.67px;top:7.76px;font-size:19.19px;color:#777;letter-spacing:1.57px;transform:scaleX(1.1200);">02</span>
<span class="t" style="left:756.23px;top:7.76px;font-size:19.19px;color:#777;letter-spacing:1.08px;transform:scaleX(1.1200);">03</span>
<span class="t" style="left:1019.18px;top:7.76px;font-size:19.19px;color:#777;letter-spacing:1.98px;transform:scaleX(1.1200);">04</span>
<span class="t" style="left:1285.67px;top:7.76px;font-size:19.19px;color:#777;letter-spacing:0.68px;transform:scaleX(1.1200);">05</span>
<span class="t" style="left:1550.00px;top:7.76px;font-size:19.19px;color:#777;letter-spacing:2.14px;transform:scaleX(1.1200);">06</span>
<span class="t" style="left:1817.58px;top:7.76px;font-size:19.19px;color:#777;letter-spacing:0.58px;transform:scaleX(1.1200);">07</span>
<span class="t" style="left:226.44px;top:151.66px;font-size:19.19px;color:#777;letter-spacing:1.75px;transform:scaleX(1.1200);">08</span>
<span class="t" style="left:491.00px;top:151.66px;font-size:19.19px;color:#777;letter-spacing:2.14px;transform:scaleX(1.1200);">09</span>
<span class="t" style="left:760.64px;top:151.66px;font-size:19.19px;color:#777;transform:scaleX(0.9732);">10</span>
<span class="t" style="left:1027.71px;top:151.66px;font-size:19.19px;color:#777;letter-spacing:-0.96px;transform:scaleX(0.9300);">11</span>
<span class="t" style="left:1292.54px;top:151.66px;font-size:19.19px;color:#777;letter-spacing:-0.96px;transform:scaleX(0.9300);">12</span>
<span class="t" style="left:1557.36px;top:151.66px;font-size:19.19px;color:#777;letter-spacing:-0.96px;transform:scaleX(0.9300);">13</span>
<span class="t" style="left:1822.15px;top:151.66px;font-size:19.19px;color:#777;transform:scaleX(0.9375);">14</span>
<span class="t" style="left:233.54px;top:296.56px;font-size:19.19px;color:#777;letter-spacing:-0.96px;transform:scaleX(0.9300);">15</span>
<span class="t" style="left:498.00px;top:296.56px;font-size:19.19px;color:#777;letter-spacing:-0.58px;transform:scaleX(0.9300);">16</span>
<span class="t" style="left:762.36px;top:296.56px;font-size:19.19px;color:#777;letter-spacing:-0.96px;transform:scaleX(0.9300);">17</span>
<span class="t" style="left:1026.49px;top:296.56px;font-size:19.19px;color:#777;letter-spacing:-0.03px;transform:scaleX(0.9300);">18</span>
<span class="t" style="left:1292.00px;top:296.56px;font-size:19.19px;color:#777;letter-spacing:-0.58px;transform:scaleX(0.9300);">19</span>
<span class="t" style="left:1550.67px;top:296.56px;font-size:19.19px;color:#777;letter-spacing:0.68px;transform:scaleX(1.1200);">20</span>
<span class="t" style="left:1823.27px;top:296.56px;font-size:19.19px;color:#777;letter-spacing:-0.96px;transform:scaleX(0.9300);">21</span>
<span class="t" style="left:228.81px;top:440.86px;font-size:19.19px;color:#777;transform:scaleX(1.1069);">22</span>
<span class="t" style="left:494.41px;top:440.86px;font-size:19.19px;color:#777;transform:scaleX(1.0775);">23</span>
<span class="t" style="left:756.37px;top:440.86px;font-size:19.19px;color:#777;letter-spacing:0.08px;transform:scaleX(1.1200);">24</span>
<span class="t" style="left:1022.86px;top:440.86px;font-size:19.19px;color:#777;transform:scaleX(1.0566);">25</span>
<span class="t" style="left:1287.20px;top:440.86px;font-size:19.19px;color:#777;transform:scaleX(1.0866);">26</span>
<span class="t" style="left:1553.02px;top:440.86px;font-size:19.19px;color:#777;transform:scaleX(1.0486);">27</span>
<span class="t" style="left:1818.36px;top:440.86px;font-size:19.19px;color:#777;transform:scaleX(1.1152);">28</span>
<div class="bar" style="left:66.7px;top:47.0px;width:261.1px"></div>
<div class="pill" style="left:111.0px;top:55.0px"></div>
<svg style="left:111px;top:55px" width="35" height="28" viewBox="1262 365 749.595 599.676" fill="none" stroke="#22262b" stroke-width="37" stroke-linejoin="round" stroke-linecap="round"><path d="M1385,600 L1590,428 L1795,600 L1755,628 L1590,500 L1425,628 Z" /><path d="M1435,640 L1435,760 Q1435,800 1480,800 L1655,800" /><path d="M1545,800 L1545,700 Q1545,662 1585,662 Q1625,662 1625,700 L1625,800" /><circle cx="1770" cy="755" r="68" fill="#fff"/><path d="M1645,940 Q1660,860 1720,838 M1820,838 Q1880,860 1895,940 L1645,940" /></svg>
<span class="t" style="left:158.79px;top:57.55px;font-size:21.8px;color:#0a0a0a;transform:scaleX(1.1072);">Owner Vaca</span>
<div class="bar" style="left:331.9px;top:47.0px;width:261.1px"></div>
<div class="pill" style="left:376.2px;top:55.0px"></div>
<svg style="left:376.2px;top:55px" width="35" height="28" viewBox="1262 365 749.595 599.676" fill="none" stroke="#22262b" stroke-width="37" stroke-linejoin="round" stroke-linecap="round"><path d="M1385,600 L1590,428 L1795,600 L1755,628 L1590,500 L1425,628 Z" /><path d="M1435,640 L1435,760 Q1435,800 1480,800 L1655,800" /><path d="M1545,800 L1545,700 Q1545,662 1585,662 Q1625,662 1625,700 L1625,800" /><circle cx="1770" cy="755" r="68" fill="#fff"/><path d="M1645,940 Q1660,860 1720,838 M1820,838 Q1880,860 1895,940 L1645,940" /></svg>
<span class="t" style="left:423.51px;top:57.55px;font-size:21.8px;color:#0a0a0a;transform:scaleX(1.1072);">Owner Vaca</span>
<div class="bar" style="left:597.2px;top:47.0px;width:261.1px"></div>
<div class="pill" style="left:641.5px;top:55.0px"></div>
<svg style="left:641.5px;top:55px" width="35" height="28" viewBox="535 365 749.595 599.676" ><path d="M670,610 L670,545 Q670,490 725,490 L1055,490 Q1110,490 1110,545 L1110,610 Z" fill="#c926c9"/><rect x="735" y="428" width="56" height="80" rx="14" fill="#c926c9"/><rect x="990" y="428" width="56" height="80" rx="14" fill="#c926c9"/><path d="M695,600 L695,850 Q695,905 750,905 L830,905" fill="none" stroke="#c926c9" stroke-width="50"/><path d="M775,690 L935,690 M775,795 L855,795" fill="none" stroke="#c926c9" stroke-width="42" stroke-linecap="round"/><path d="M1092,662 L1168,735 L985,915 L898,930 L908,840 Z" fill="#c926c9"/><path d="M958,858 L1075,742" fill="none" stroke="#fff" stroke-width="24"/></svg>
<span class="t" style="left:688.15px;top:57.55px;font-size:21.8px;color:#0a0a0a;transform:scaleX(0.9698);">183</span>
<div class="bar" style="left:862.4px;top:47.0px;width:261.1px"></div>
<div class="pill" style="left:906.7px;top:55.0px"></div>
<svg style="left:906.7px;top:55px" width="35" height="28" viewBox="535 365 749.595 599.676" ><path d="M670,610 L670,545 Q670,490 725,490 L1055,490 Q1110,490 1110,545 L1110,610 Z" fill="#c926c9"/><rect x="735" y="428" width="56" height="80" rx="14" fill="#c926c9"/><rect x="990" y="428" width="56" height="80" rx="14" fill="#c926c9"/><path d="M695,600 L695,850 Q695,905 750,905 L830,905" fill="none" stroke="#c926c9" stroke-width="50"/><path d="M775,690 L935,690 M775,795 L855,795" fill="none" stroke="#c926c9" stroke-width="42" stroke-linecap="round"/><path d="M1092,662 L1168,735 L985,915 L898,930 L908,840 Z" fill="#c926c9"/><path d="M958,858 L1075,742" fill="none" stroke="#fff" stroke-width="24"/></svg>
<span class="t" style="left:952.90px;top:57.55px;font-size:21.8px;color:#0a0a0a;transform:scaleX(0.9844);">186</span>
<div class="bar" style="left:1127.7px;top:47.0px;width:261.1px"></div>
<div class="pill" style="left:1172.0px;top:55.0px"></div>
<svg style="left:1172px;top:55px" width="35" height="28" viewBox="535 365 749.595 599.676" ><path d="M670,610 L670,545 Q670,490 725,490 L1055,490 Q1110,490 1110,545 L1110,610 Z" fill="#c926c9"/><rect x="735" y="428" width="56" height="80" rx="14" fill="#c926c9"/><rect x="990" y="428" width="56" height="80" rx="14" fill="#c926c9"/><path d="M695,600 L695,850 Q695,905 750,905 L830,905" fill="none" stroke="#c926c9" stroke-width="50"/><path d="M775,690 L935,690 M775,795 L855,795" fill="none" stroke="#c926c9" stroke-width="42" stroke-linecap="round"/><path d="M1092,662 L1168,735 L985,915 L898,930 L908,840 Z" fill="#c926c9"/><path d="M958,858 L1075,742" fill="none" stroke="#fff" stroke-width="24"/></svg>
<span class="t" style="left:1218.54px;top:57.55px;font-size:21.8px;color:#0a0a0a;transform:scaleX(0.9698);">192</span>
<div class="bar" style="left:1392.9px;top:47.0px;width:261.1px"></div>
<div class="pill" style="left:1437.2px;top:55.0px"></div>
<svg style="left:1437.2px;top:55px" width="35" height="28" viewBox="535 365 749.595 599.676" ><path d="M670,610 L670,545 Q670,490 725,490 L1055,490 Q1110,490 1110,545 L1110,610 Z" fill="#c926c9"/><rect x="735" y="428" width="56" height="80" rx="14" fill="#c926c9"/><rect x="990" y="428" width="56" height="80" rx="14" fill="#c926c9"/><path d="M695,600 L695,850 Q695,905 750,905 L830,905" fill="none" stroke="#c926c9" stroke-width="50"/><path d="M775,690 L935,690 M775,795 L855,795" fill="none" stroke="#c926c9" stroke-width="42" stroke-linecap="round"/><path d="M1092,662 L1168,735 L985,915 L898,930 L908,840 Z" fill="#c926c9"/><path d="M958,858 L1075,742" fill="none" stroke="#fff" stroke-width="24"/></svg>
<span class="t" style="left:1483.28px;top:57.55px;font-size:21.8px;color:#0a0a0a;transform:scaleX(0.9698);">195</span>
<div class="bar" style="left:1658.1px;top:47.0px;width:261.1px"></div>
<div class="pill" style="left:1702.4px;top:55.0px"></div>
<svg style="left:1702.4px;top:55px" width="35" height="28" viewBox="535 365 749.595 599.676" ><path d="M670,610 L670,545 Q670,490 725,490 L1055,490 Q1110,490 1110,545 L1110,610 Z" fill="#c926c9"/><rect x="735" y="428" width="56" height="80" rx="14" fill="#c926c9"/><rect x="990" y="428" width="56" height="80" rx="14" fill="#c926c9"/><path d="M695,600 L695,850 Q695,905 750,905 L830,905" fill="none" stroke="#c926c9" stroke-width="50"/><path d="M775,690 L935,690 M775,795 L855,795" fill="none" stroke="#c926c9" stroke-width="42" stroke-linecap="round"/><path d="M1092,662 L1168,735 L985,915 L898,930 L908,840 Z" fill="#c926c9"/><path d="M958,858 L1075,742" fill="none" stroke="#fff" stroke-width="24"/></svg>
<span class="t" style="left:1750.06px;top:57.55px;font-size:21.8px;color:#0a0a0a;transform:scaleX(1.1068);">347</span>
<div class="bar" style="left:331.9px;top:191.0px;width:261.1px"></div>
<div class="pill" style="left:376.2px;top:199.0px"></div>
<svg style="left:376.2px;top:199px" width="35" height="28" viewBox="535 365 749.595 599.676" ><path d="M670,610 L670,545 Q670,490 725,490 L1055,490 Q1110,490 1110,545 L1110,610 Z" fill="#c926c9"/><rect x="735" y="428" width="56" height="80" rx="14" fill="#c926c9"/><rect x="990" y="428" width="56" height="80" rx="14" fill="#c926c9"/><path d="M695,600 L695,850 Q695,905 750,905 L830,905" fill="none" stroke="#c926c9" stroke-width="50"/><path d="M775,690 L935,690 M775,795 L855,795" fill="none" stroke="#c926c9" stroke-width="42" stroke-linecap="round"/><path d="M1092,662 L1168,735 L985,915 L898,930 L908,840 Z" fill="#c926c9"/><path d="M958,858 L1075,742" fill="none" stroke="#fff" stroke-width="24"/></svg>
<span class="t" style="left:424.25px;top:201.55px;font-size:21.8px;color:#0a0a0a;letter-spacing:-1.09px;transform:scaleX(0.9300);">161</span>
<div class="bar" style="left:597.2px;top:191.0px;width:261.1px"></div>
<div class="pill" style="left:641.5px;top:199.0px"></div>
<svg style="left:641.5px;top:199px" width="35" height="28" viewBox="535 365 749.595 599.676" ><path d="M670,610 L670,545 Q670,490 725,490 L1055,490 Q1110,490 1110,545 L1110,610 Z" fill="#c926c9"/><rect x="735" y="428" width="56" height="80" rx="14" fill="#c926c9"/><rect x="990" y="428" width="56" height="80" rx="14" fill="#c926c9"/><path d="M695,600 L695,850 Q695,905 750,905 L830,905" fill="none" stroke="#c926c9" stroke-width="50"/><path d="M775,690 L935,690 M775,795 L855,795" fill="none" stroke="#c926c9" stroke-width="42" stroke-linecap="round"/><path d="M1092,662 L1168,735 L985,915 L898,930 L908,840 Z" fill="#c926c9"/><path d="M958,858 L1075,742" fill="none" stroke="#fff" stroke-width="24"/></svg>
<span class="t" style="left:688.05px;top:201.55px;font-size:21.8px;color:#0a0a0a;transform:scaleX(1.0313);">146</span>
<div class="bar" style="left:1127.7px;top:191.0px;width:261.1px"></div>
<div class="pill" style="left:1172.0px;top:199.0px"></div>
<svg style="left:1172px;top:199px" width="35" height="28" viewBox="1262 365 749.595 599.676" fill="none" stroke="#22262b" stroke-width="37" stroke-linejoin="round" stroke-linecap="round"><path d="M1385,600 L1590,428 L1795,600 L1755,628 L1590,500 L1425,628 Z" /><path d="M1435,640 L1435,760 Q1435,800 1480,800 L1655,800" /><path d="M1545,800 L1545,700 Q1545,662 1585,662 Q1625,662 1625,700 L1625,800" /><circle cx="1770" cy="755" r="68" fill="#fff"/><path d="M1645,940 Q1660,860 1720,838 M1820,838 Q1880,860 1895,940 L1645,940" /></svg>
<span class="t" style="left:1219.67px;top:201.55px;font-size:21.8px;color:#0a0a0a;transform:scaleX(1.1072);">Owner Vaca</span>
<div class="bar" style="left:1392.9px;top:191.0px;width:261.1px"></div>
<div class="pill" style="left:1437.2px;top:199.0px"></div>
<svg style="left:1437.2px;top:199px" width="35" height="28" viewBox="535 365 749.595 599.676" ><path d="M670,610 L670,545 Q670,490 725,490 L1055,490 Q1110,490 1110,545 L1110,610 Z" fill="#c926c9"/><rect x="735" y="428" width="56" height="80" rx="14" fill="#c926c9"/><rect x="990" y="428" width="56" height="80" rx="14" fill="#c926c9"/><path d="M695,600 L695,850 Q695,905 750,905 L830,905" fill="none" stroke="#c926c9" stroke-width="50"/><path d="M775,690 L935,690 M775,795 L855,795" fill="none" stroke="#c926c9" stroke-width="42" stroke-linecap="round"/><path d="M1092,662 L1168,735 L985,915 L898,930 L908,840 Z" fill="#c926c9"/><path d="M958,858 L1075,742" fill="none" stroke="#fff" stroke-width="24"/></svg>
<span class="t" style="left:1484.23px;top:201.55px;font-size:21.8px;color:#0a0a0a;transform:scaleX(1.0265);">190</span>
<div class="bar" style="left:1658.1px;top:191.0px;width:261.1px"></div>
<div class="pill" style="left:1702.4px;top:199.0px"></div>
<svg style="left:1702.4px;top:199px" width="35" height="28" viewBox="535 365 749.595 599.676" ><path d="M670,610 L670,545 Q670,490 725,490 L1055,490 Q1110,490 1110,545 L1110,610 Z" fill="#c926c9"/><rect x="735" y="428" width="56" height="80" rx="14" fill="#c926c9"/><rect x="990" y="428" width="56" height="80" rx="14" fill="#c926c9"/><path d="M695,600 L695,850 Q695,905 750,905 L830,905" fill="none" stroke="#c926c9" stroke-width="50"/><path d="M775,690 L935,690 M775,795 L855,795" fill="none" stroke="#c926c9" stroke-width="42" stroke-linecap="round"/><path d="M1092,662 L1168,735 L985,915 L898,930 L908,840 Z" fill="#c926c9"/><path d="M958,858 L1075,742" fill="none" stroke="#fff" stroke-width="24"/></svg>
<span class="t" style="left:1748.97px;top:201.55px;font-size:21.8px;color:#0a0a0a;transform:scaleX(0.9882);">185</span>
<div class="bar" style="left:66.7px;top:335.0px;width:261.1px"></div>
<div class="pill" style="left:111.0px;top:343.0px"></div>
<svg style="left:111px;top:343px" width="35" height="28" viewBox="535 365 749.595 599.676" ><path d="M670,610 L670,545 Q670,490 725,490 L1055,490 Q1110,490 1110,545 L1110,610 Z" fill="#c926c9"/><rect x="735" y="428" width="56" height="80" rx="14" fill="#c926c9"/><rect x="990" y="428" width="56" height="80" rx="14" fill="#c926c9"/><path d="M695,600 L695,850 Q695,905 750,905 L830,905" fill="none" stroke="#c926c9" stroke-width="50"/><path d="M775,690 L935,690 M775,795 L855,795" fill="none" stroke="#c926c9" stroke-width="42" stroke-linecap="round"/><path d="M1092,662 L1168,735 L985,915 L898,930 L908,840 Z" fill="#c926c9"/><path d="M958,858 L1075,742" fill="none" stroke="#fff" stroke-width="24"/></svg>
<span class="t" style="left:157.65px;top:345.55px;font-size:21.8px;color:#0a0a0a;transform:scaleX(1.0026);">154</span>
<div class="bar" style="left:597.2px;top:335.0px;width:261.1px"></div>
<div class="pill" style="left:641.5px;top:343.0px"></div>
<svg style="left:641.5px;top:343px" width="35" height="28" viewBox="1262 365 749.595 599.676" fill="none" stroke="#22262b" stroke-width="37" stroke-linejoin="round" stroke-linecap="round"><path d="M1385,600 L1590,428 L1795,600 L1755,628 L1590,500 L1425,628 Z" /><path d="M1435,640 L1435,760 Q1435,800 1480,800 L1655,800" /><path d="M1545,800 L1545,700 Q1545,662 1585,662 Q1625,662 1625,700 L1625,800" /><circle cx="1770" cy="755" r="68" fill="#fff"/><path d="M1645,940 Q1660,860 1720,838 M1820,838 Q1880,860 1895,940 L1645,940" /></svg>
<span class="t" style="left:689.23px;top:345.55px;font-size:21.8px;color:#0a0a0a;transform:scaleX(1.1072);">Owner Vaca</span>
<div class="bar" style="left:38.0px;top:191.0px;width:289.8px"></div>
<div class="pill" style="left:43.0px;top:199.0px"></div>
<svg style="left:43px;top:199px" width="35" height="28" viewBox="535 365 749.595 599.676" ><path d="M670,610 L670,545 Q670,490 725,490 L1055,490 Q1110,490 1110,545 L1110,610 Z" fill="#c926c9"/><rect x="735" y="428" width="56" height="80" rx="14" fill="#c926c9"/><rect x="990" y="428" width="56" height="80" rx="14" fill="#c926c9"/><path d="M695,600 L695,850 Q695,905 750,905 L830,905" fill="none" stroke="#c926c9" stroke-width="50"/><path d="M775,690 L935,690 M775,795 L855,795" fill="none" stroke="#c926c9" stroke-width="42" stroke-linecap="round"/><path d="M1092,662 L1168,735 L985,915 L898,930 L908,840 Z" fill="#c926c9"/><path d="M958,858 L1075,742" fill="none" stroke="#fff" stroke-width="24"/></svg>
<span class="t" style="left:90.24px;top:201.55px;font-size:21.8px;color:#0a0a0a;transform:scaleX(1.1068);">347</span>
<span class="t" style="left:909.70px;top:252.90px;font-size:22.09px;color:#0a0a0a;transform:scaleX(0.9641);">129</span>
<span class="t" style="left:382.03px;top:397.30px;font-size:22.09px;color:#0a0a0a;letter-spacing:-1.10px;transform:scaleX(0.9300);">151</span>
<span class="t" style="left:908.76px;top:397.30px;font-size:22.09px;color:#0a0a0a;transform:scaleX(0.9917);">199</span>
<span class="t" style="left:1172.35px;top:397.30px;font-size:22.09px;color:#0a0a0a;letter-spacing:0.04px;transform:scaleX(1.1200);">207</span>
<span class="t" style="left:1442.76px;top:397.30px;font-size:22.09px;color:#0a0a0a;letter-spacing:-1.10px;transform:scaleX(0.9300);">211</span>
<span class="t" style="left:1703.09px;top:397.30px;font-size:22.09px;color:#0a0a0a;letter-spacing:0.17px;transform:scaleX(1.1200);">205</span>
</div>
<div style="left:2890px;top:1580px;width:102px;height:102px;border-radius:50%;background:linear-gradient(135deg,#6366f1 0%,#8b5cf6 100%);box-shadow:0 7px 26px rgba(99,102,241,.30)"></div>
<svg style="left:2915px;top:1606px" width="54" height="48" viewBox="2915 1606 54 48"><path d="M2941.9,1612.3 C2952.3,1612.3 2960.7,1619 2960.7,1627.3 C2960.7,1635.6 2952.3,1642.3 2941.9,1642.3 C2939.7,1642.3 2937.7,1642 2935.8,1641.5 C2932.5,1644.2 2928.3,1646 2923.4,1646.2 C2925.8,1644 2927.2,1641 2927.7,1637.6 C2924.9,1634.9 2923.2,1631.3 2923.2,1627.3 C2923.2,1619 2931.5,1612.3 2941.9,1612.3Z" fill="#fff"/></svg>
</div>
</body></html>
